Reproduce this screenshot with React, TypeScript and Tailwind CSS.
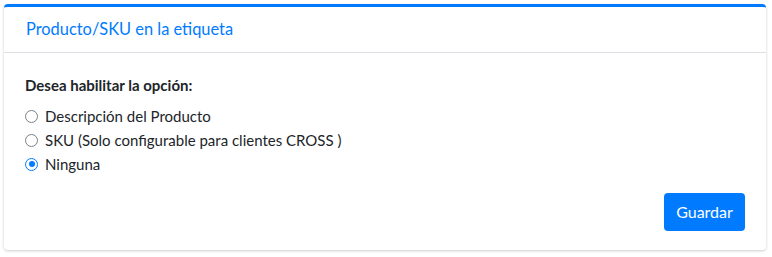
export default function App() {
  return (
    <div className="w-[772px] h-[257px] bg-white pt-[4px] px-[4px]" style={{ fontFamily: "Lato, 'Noto Sans', sans-serif" }}>
      <div className="w-[762px] h-[246px] bg-white rounded-[4px] border-t-[3px] border-[#007bff] shadow-[0_1px_3px_rgba(0,0,0,0.2)] flex flex-col">
        <div className="h-[46px] border-b border-[#dee2e6] px-[22px] flex items-center">
          <span className="text-[16.4px] text-[#007bff]">Producto/SKU en la etiqueta</span>
        </div>
        <div className="px-[21px] pt-[22px] flex flex-col">
          <div className="text-[15px] font-bold text-[#212529] leading-[20px]">Desea habilitar la opción:</div>
          <div className="mt-[9px] flex flex-col">
            {[
              ["Descripción del Producto", false],
              ["SKU (Solo configurable para clientes CROSS )", false],
              ["Ninguna", true],
            ].map(([label, checked], i) => (
              <label key={i} className="h-[24px] flex items-center gap-[7px] text-[15px] text-[#212529]">
                {checked ? (
                  <span className="w-[13px] h-[13px] rounded-full border-[1.5px] border-[#007bff] flex items-center justify-center">
                    <span className="w-[6px] h-[6px] rounded-full bg-[#007bff]" />
                  </span>
                ) : (
                  <span className="w-[13px] h-[13px] rounded-full border-[1.5px] border-[#7a7f86]" />
                )}
                <span>{label as string}</span>
              </label>
            ))}
          </div>
          <div className="flex justify-end mt-[17px]">
            <button className="w-[81px] h-[38px] rounded-[4px] bg-[#007bff] text-white text-[16px]">Guardar</button>
          </div>
        </div>
      </div>
    </div>
  );
}
